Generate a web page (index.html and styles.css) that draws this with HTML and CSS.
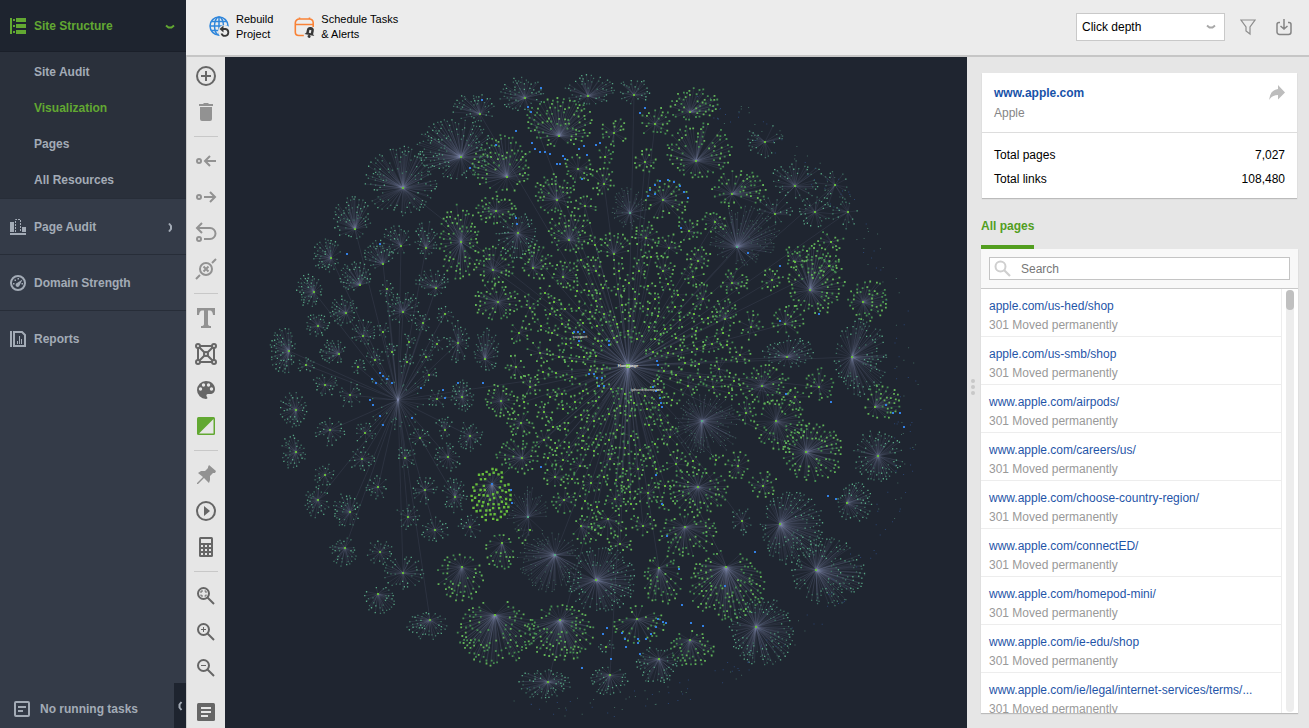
FILE: index.html
```html
<!DOCTYPE html>
<html lang="en">
<head>
<meta charset="utf-8">
<title>Site Structure – Visualization</title>
<link rel="stylesheet" href="styles.css">
</head>
<body>
<div class="app">
  <nav class="sidebar" aria-label="Main">
    <button class="nav-head" type="button">
      <svg class="nav-icon" viewBox="0 0 16 16"><path fill="currentColor" d="M0 0h2v16H0zM3 1h2v2H3zM3 7h2v2H3zM3 13h2v2H3zM6 0h10v4H6zM6 6h10v4H6zM6 12h10v4H6z"/></svg>
      <span>Site Structure</span>
      <svg class="nav-chev" viewBox="0 0 10 10"><path d="M1 4.500 3.500 6.500h3L9 4.500" fill="none" stroke="currentColor" stroke-width="2"/></svg>
    </button>
    <ul class="subnav">
      <li><a href="#audit">Site Audit</a></li>
      <li><a href="#visualization" class="active">Visualization</a></li>
      <li><a href="#pages">Pages</a></li>
      <li><a href="#resources">All Resources</a></li>
    </ul>
    <button class="nav-item" type="button">
      <svg class="nav-icon" viewBox="0 0 16 16"><path fill="currentColor" d="M0 3h4v10H0zM12 8h4v5h-4zM0 14h16v2H0z"/><path d="M5.500 13V.5h5V13" fill="none" stroke="currentColor" stroke-dasharray="2 1"/></svg>
      <span>Page Audit</span>
      <svg class="nav-chev" viewBox="0 0 10 10"><path d="M4 1.500 6 4v3L4 9.500" fill="none" stroke="currentColor" stroke-width="2"/></svg>
    </button>
    <button class="nav-item" type="button">
      <svg class="nav-icon" viewBox="0 0 16 16"><circle cx="8" cy="8" r="7" fill="none" stroke="currentColor" stroke-width="2"/><path fill="currentColor" d="M12.500 4.500 9.500 10.500a2 2 0 1 1-2.500-2.500zM7.500 3h1.500v1.500H7.500zM4.500 4.500H6V6H4.500zM3 8h1.500v1.500H3zM11.500 8H13v1.500h-1.500z"/></svg>
      <span>Domain Strength</span>
    </button>
    <button class="nav-item last" type="button">
      <svg class="nav-icon" viewBox="0 0 16 16"><path d="M1 0v16M4 1h8l3 3v11H4z" fill="none" stroke="currentColor" stroke-width="2"/><path d="M7.500 13v-3M9.500 13V5M11.500 13V8" stroke="currentColor"/></svg>
      <span>Reports</span>
    </button>
    <div class="side-foot">
      <button class="tasks" type="button">
        <svg class="nav-icon" viewBox="0 0 16 16"><rect x="1" y="1" width="14" height="14" rx="1" fill="none" stroke="currentColor" stroke-width="2"/><path d="M4 6h8M4 10h5" stroke="currentColor" stroke-width="2"/></svg>
        <span>No running tasks</span>
      </button>
      <button class="collapse" type="button" aria-label="Collapse sidebar"><svg viewBox="0 0 10 10"><path d="M6.500 1 4.500 3.500v3l2 2.500" fill="none" stroke="currentColor" stroke-width="2"/></svg></button>
    </div>
  </nav>

  <div class="main">
    <header class="topbar">
      <button class="action" type="button">
        <svg viewBox="0 0 22 22"><g fill="none" stroke="#2f86db" stroke-width="1.500"><circle cx="10" cy="10" r="9"/><ellipse cx="10" cy="10" rx="4.500" ry="9"/><path d="M10 1v18M1 10h18M2.500 5.500h15M2.500 14.500h15"/></g><circle cx="15.500" cy="15.500" r="6.500" fill="#ececec"/><path d="M12 13h4.500a3.500 3.500 0 1 1-4 4.500" fill="none" stroke="#383838" stroke-width="1.800"/><path d="m14.500 9.500-4 3.500 4 3.500z" fill="#383838"/></svg>
        <span>Rebuild<br>Project</span>
      </button>
      <button class="action" type="button">
        <svg viewBox="0 0 22 22"><g fill="none" stroke="#f98236" stroke-width="1.600"><path d="M19.200 11V6.500a4 4 0 0 0-4-3.500H5.500A4 4 0 0 0 1.300 7v9q0 3.500 3.500 3.500h5M1.500 8.500h17.500M5.500 3V1.500M15.500 3V1.500"/></g><g transform="rotate(12 16 16)"><path d="M16 11a3.500 3.500 0 0 1 3.500 3.500v3l1.500 1.500H11l1.500-1.500v-3A3.500 3.500 0 0 1 16 11z" fill="#383838"/><path d="M15 14h2v3h-2z" fill="#ececec"/><circle cx="16" cy="20.500" r="1.500" fill="#383838"/></g></svg>
        <span>Schedule Tasks<br>&amp; Alerts</span>
      </button>
      <div class="top-right">
        <div class="select-wrap">
          <select aria-label="Node sizing"><option>Click depth</option><option>Page rank</option></select>
          <svg viewBox="0 0 10 10"><path d="M1 3.500 3.500 5.500h3L9 3.500" fill="none" stroke="#a8a8a8" stroke-width="2"/></svg>
        </div>
        <button class="icon-btn" type="button" aria-label="Filter"><svg viewBox="0 0 16 18"><path d="M1 2h14L10 9v7l-4-3V9z" fill="none" stroke="#8d8d8d" stroke-width="1.200"/></svg></button>
        <button class="icon-btn" type="button" aria-label="Export"><svg viewBox="0 0 16 18"><path d="M4 4.500H3a2 2 0 0 0-2 2V14a2.500 2.500 0 0 0 2.500 2.500h9A2.500 2.500 0 0 0 15 14V6.500a2 2 0 0 0-2-2h-1M8 1v9M4.500 8 8 11l3.500-3" fill="none" stroke="#858585" stroke-width="1.500"/></svg></button>
      </div>
    </header>

    <div class="work">
      <div class="tools" role="toolbar" aria-label="Graph tools">
        <button type="button" class="dark" aria-label="Add page"><svg viewBox="0 0 24 24"><circle cx="12" cy="12" r="9" class="ln"/><path class="ln" d="M12 7v10M7 12h10"/></svg></button>
        <button type="button" aria-label="Delete"><svg viewBox="0 0 24 24"><path class="fl" d="M5 4h4l1-1h4l1 1h4v2H5zM6 7h12v12a2 2 0 0 1-2 2H8a2 2 0 0 1-2-2z"/></svg></button>
        <hr>
        <button type="button" aria-label="Link from"><svg viewBox="0 0 24 24"><circle class="ln" cx="5" cy="12" r="2"/><path class="ln" d="M22 12H11M16 7l-5 5 5 5"/></svg></button>
        <button type="button" aria-label="Link to"><svg viewBox="0 0 24 24"><circle class="ln" cx="5" cy="12" r="2"/><path class="ln" d="M10 12h11M16 7l5 5-5 5"/></svg></button>
        <button type="button" aria-label="Redirect"><svg viewBox="0 0 24 24"><circle class="ln" cx="5" cy="18" r="2"/><path class="ln" d="M8 2 3 7l5 5M4 7h12a5.500 5.500 0 0 1 0 11h-6"/></svg></button>
        <button type="button" aria-label="Remove link"><svg viewBox="0 0 24 24"><circle class="ln" cx="12" cy="12" r="6"/><path class="ln" d="m9.500 9.500 5 5M14.500 9.500l-5 5M18 6l4-4M2 22l4-4"/></svg></button>
        <hr>
        <button type="button" aria-label="Text labels"><svg viewBox="0 0 24 24"><path class="fl" d="M3 2h18v7h-2q-.5-4.500-3-4.500h-2V18q0 2 3 2v2H7v-2q3 0 3-2V4.500H8Q5.500 4.500 5 9H3z"/></svg></button>
        <button type="button" class="dark" aria-label="Graph layout"><svg viewBox="0 0 24 24"><path class="ln" d="M4 4h16v16H4zM4 4l16 16M20 4 4 20"/><g class="nodes"><circle cx="4" cy="4" r="2"/><circle cx="20" cy="4" r="2"/><circle cx="4" cy="20" r="2"/><circle cx="20" cy="20" r="2"/><circle cx="12" cy="12" r="2"/></g></svg></button>
        <button type="button" class="dark" aria-label="Colors"><svg viewBox="0 0 24 24"><path class="fl" d="M12 3c5 0 9 3.500 9 8 0 3-2 5-5 5h-2c-2 0-2 2-1 3s0 2-1 2a9 9 0 0 1 0-18z"/><g fill="#e6e6e6"><circle cx="6.500" cy="11" r="1.700"/><circle cx="9.500" cy="7" r="1.700"/><circle cx="14.500" cy="7" r="1.700"/><circle cx="17.500" cy="11" r="1.700"/></g></svg></button>
        <button type="button" class="on" aria-label="Invert background"><svg viewBox="0 0 24 24"><rect x="3" y="3" width="18" height="18" rx="1.500" class="fl"/><path d="M19.500 5v14.500H5z" fill="#e6e6e6"/></svg></button>
        <hr>
        <button type="button" aria-label="Pin"><svg viewBox="0 0 24 24"><path class="fl" d="m15 2 7 6-1 2-2 0-3 3v4l-1 3-5-5-6 6H3v-1l6-6-5-4 3-2h4l3-3V4z"/></svg></button>
        <button type="button" class="dark" aria-label="Play"><svg viewBox="0 0 24 24"><circle class="ln" cx="12" cy="12" r="9"/><path class="fl" d="m10 7 6 5-6 5z"/></svg></button>
        <button type="button" class="dark" aria-label="Recalculate"><svg viewBox="0 0 24 24"><rect class="fl" x="5" y="2" width="14" height="20" rx="1.500"/><path fill="#e6e6e6" d="M7 4h10v4H7zM7 10h2v2H7zM11 10h2v2h-2zM15 10h2v2h-2zM7 14h2v2H7zM11 14h2v2h-2zM15 14h2v2h-2zM7 18h2v2H7zM11 18h2v2h-2zM15 18h2v2h-2z"/></svg></button>
        <hr>
        <button type="button" class="dark" aria-label="Fit to screen"><svg viewBox="0 0 24 24"><circle class="ln" cx="9.500" cy="9.500" r="5.500"/><path class="ln" d="m13.500 13.500 6.500 6.500"/><path class="thin" d="M7 9V7h2M10.500 7H12v2M7 10.500V12h2M12 10.500V12h-1.500"/></svg></button>
        <button type="button" class="dark" aria-label="Zoom in"><svg viewBox="0 0 24 24"><circle class="ln" cx="9.500" cy="9.500" r="5.500"/><path class="ln" d="m13.500 13.500 6.500 6.500"/><path class="thin" d="M9.500 7v5M7 9.500h5"/></svg></button>
        <button type="button" class="dark" aria-label="Zoom out"><svg viewBox="0 0 24 24"><circle class="ln" cx="9.500" cy="9.500" r="5.500"/><path class="ln" d="m13.500 13.500 6.500 6.500"/><path class="thin" d="M7 9.500h5"/></svg></button>
        <button type="button" class="dark note" aria-label="Legend"><svg viewBox="0 0 24 24"><rect class="fl" x="3" y="3" width="18" height="18" rx="1.500"/><path d="M7 8h10M7 12h10M7 16h7" stroke="#e6e6e6" stroke-width="2"/></svg></button>
      </div>

      <main class="graph"><svg id="graph" viewBox="225 57 742 671" role="img" aria-label="Site link graph"></svg></main>

      <div class="grip"><i></i><i></i><i></i></div>
      <aside class="panel">
        <section class="card">
          <div class="card-head">
            <div><a href="#apple">www.apple.com</a><p>Apple</p></div>
            <svg viewBox="0 0 16 16"><path d="M9 0v4Q1 5 0 15q3-5 9-5v4.500l7-7z" fill="#bdbdbd"/></svg>
          </div>
          <dl>
            <div><dt>Total pages</dt><dd>7,027</dd></div>
            <div><dt>Total links</dt><dd>108,480</dd></div>
          </dl>
        </section>
        <div class="tabs"><button type="button">All pages</button></div>
        <div class="pages">
          <label class="search">
            <svg viewBox="0 0 18 18"><circle cx="6.500" cy="6.500" r="5" fill="none" stroke="#cfcfcf" stroke-width="2"/><path d="m10 10 6 6" stroke="#cfcfcf" stroke-width="2.200"/></svg>
            <input type="text" placeholder="Search" aria-label="Search">
          </label>
          <div class="scroll">
            <ul>
              <li><a href="#p1">apple.com/us-hed/shop</a><span>301 Moved permanently</span></li>
              <li><a href="#p2">apple.com/us-smb/shop</a><span>301 Moved permanently</span></li>
              <li><a href="#p3">www.apple.com/airpods/</a><span>301 Moved permanently</span></li>
              <li><a href="#p4">www.apple.com/careers/us/</a><span>301 Moved permanently</span></li>
              <li><a href="#p5">www.apple.com/choose-country-region/</a><span>301 Moved permanently</span></li>
              <li><a href="#p6">www.apple.com/connectED/</a><span>301 Moved permanently</span></li>
              <li><a href="#p7">www.apple.com/homepod-mini/</a><span>301 Moved permanently</span></li>
              <li><a href="#p8">www.apple.com/ie-edu/shop</a><span>301 Moved permanently</span></li>
              <li><a href="#p9">www.apple.com/ie/legal/internet-services/terms/...</a><span>301 Moved permanently</span></li>
            </ul>
            <div class="track"><div class="thumb"></div></div>
          </div>
        </div>
      </aside>
    </div>
  </div>
</div>
<script src="graph.js"></script>
</body>
</html>
```
FILE: styles.css
```css
* { box-sizing: border-box; }
body { margin: 0; font-family: "Liberation Sans", Arial, sans-serif; font-size: 12px; color: #000; }
button { font: inherit; color: inherit; background: none; border: 0; padding: 0; text-align: left; }
a { text-decoration: none; color: inherit; }
ul, dl, dd, p { margin: 0; padding: 0; list-style: none; }
svg { display: block; flex: none; }

.app { display: flex; height: 100vh; overflow: hidden; }

.sidebar { width: 186px; flex: none; display: flex; flex-direction: column; background: #343b48; color: #a3abb6; font-weight: bold; }
.nav-head, .nav-item { display: flex; align-items: center; gap: 8px; padding: 0 11px 0 10px; flex: none; }
.nav-head { height: 52px; background: #1e242f; color: #62a832; border-bottom: 1px solid #1a1f29; }
.nav-item { height: 56px; border-bottom: 1px solid #272d38; }
.nav-item.last { border-bottom: 0; }
.nav-icon { width: 16px; height: 16px; }
.nav-chev { width: 10px; height: 10px; margin-left: auto; }
.subnav { background: #2a303b; padding-top: 2px; border-bottom: 1px solid #272d38; }
.subnav a { display: block; height: 36px; line-height: 36px; padding-left: 34px; }
.subnav .active { color: #62a832; }
.side-foot { margin-top: auto; display: flex; align-items: flex-end; justify-content: space-between; }
.tasks { display: flex; align-items: center; gap: 10px; height: 38px; padding-left: 14px; }
.collapse { width: 12px; height: 45px; background: #1e242f; display: flex; align-items: center; justify-content: center; }
.collapse svg { width: 10px; height: 10px; }

.main { flex: 1; min-width: 0; display: flex; flex-direction: column; }
.topbar { height: 57px; flex: none; display: flex; align-items: center; gap: 21px; padding: 0 12px 2px 23px; background: #ececec; border-bottom: 2px solid #c6c6c6; }
.action { display: flex; align-items: center; gap: 5px; font-size: 11px; line-height: 15px; }
.action svg { width: 22px; height: 22px; }
.top-right { margin-left: auto; display: flex; align-items: center; gap: 10px; }
.select-wrap { width: 149px; display: grid; align-items: center; }
.select-wrap select { grid-area: 1 / 1; height: 28px; appearance: none; background: #fff; border: 1px solid #c9c9c9; border-radius: 0; padding: 0 5px; font: inherit; color: #000; }
.select-wrap svg { grid-area: 1 / 1; justify-self: end; width: 10px; height: 10px; margin-right: 9px; pointer-events: none; }
.icon-btn { width: 26px; height: 26px; display: flex; align-items: center; justify-content: center; }
.icon-btn svg { width: 16px; height: 18px; }

.work { flex: 1; min-height: 0; display: flex; background: #e6e6e6; }
.tools { width: 39px; flex: none; display: flex; flex-direction: column; align-items: center; padding-top: 1px; border-left: 1px solid #c9c9c9; color: #929292; }
.tools button { height: 36px; flex: none; display: flex; align-items: center; }
.tools svg { width: 24px; height: 24px; }
.tools hr { width: 24px; height: 13px; flex: none; margin: 0; border: 0; background: linear-gradient(#c8c8c8, #c8c8c8) center / 24px 1px no-repeat; }
.tools .dark { color: #666; }
.tools .on { color: #62a832; }
.tools .note { height: 32px; margin-top: auto; }
.ln { fill: none; stroke: currentColor; stroke-width: 2; }
.fl { fill: currentColor; }
.thin { fill: none; stroke: currentColor; stroke-width: 1; }
.nodes { fill: #e6e6e6; stroke: currentColor; stroke-width: 2; }

.graph { flex: 1; min-width: 0; background: #1f2530; overflow: hidden; }
.graph svg { width: 100%; height: 100%; }
.edge { stroke: #8994b4; stroke-width: 1; stroke-opacity: .11; }
.trunk { stroke: #8994b4; stroke-width: 1; stroke-opacity: .12; }
.label { font-size: 4px; font-weight: bold; fill: #e4e6df; text-anchor: middle; }

.grip { width: 14px; flex: none; display: flex; flex-direction: column; align-items: center; justify-content: center; gap: 2px; padding: 0 2px 12px 0; }
.grip i { width: 4px; height: 4px; border-radius: 2px; background: #c8c8c8; }
.panel { width: 317px; flex: none; margin-right: 11px; padding: 16px 0 15px; display: flex; flex-direction: column; }
.card { margin: 0 1px; background: #fff; box-shadow: 0 1px 1px #bbb; }
.card-head { display: flex; justify-content: space-between; padding: 10px 12px 9px; line-height: 20px; border-bottom: 1px solid #ddd; color: #858585; }
.card-head a { color: #1852a8; font-weight: bold; }
.card-head svg { width: 16px; height: 16px; margin-top: 2px; }
.card dl { padding: 10px 12px 7px; line-height: 24px; }
.card dl div { display: flex; justify-content: space-between; }
.tabs { margin-top: 14px; display: flex; flex: none; }
.tabs button { height: 37px; padding-bottom: 5px; border-bottom: 4px solid #529e1f; color: #529e1f; font-weight: bold; line-height: 28px; }
.pages { flex: 1; min-height: 0; display: flex; flex-direction: column; background: #fff; box-shadow: 0 1px 1px #bbb; }
.search { flex: none; display: grid; align-items: center; padding: 8px; background: #f8f8f8; border-bottom: 1px solid #c9c9c9; }
.search input { grid-area: 1 / 1; width: 100%; height: 23px; border: 1px solid #c4c4c4; border-radius: 0; background: #fff; padding: 1px 8px 0 31px; font: inherit; }
.search input::placeholder { color: #777; opacity: 1; }
.search svg { grid-area: 1 / 1; z-index: 1; width: 18px; height: 18px; margin-left: 5px; }
.scroll { flex: 1; min-height: 0; display: flex; overflow: hidden; }
.scroll ul { flex: 1; min-width: 0; border-right: 1px solid #ededed; }
.scroll li { height: 48px; padding: 8px 8px 1px; border-bottom: 1px solid #ededed; line-height: 19px; white-space: nowrap; }
.scroll a, .scroll li span { display: block; }
.scroll a { color: #1f55a8; }
.scroll li span { color: #999; }
.track { width: 8px; flex: none; margin: 1px 4px 1px; border-radius: 4px; background: #ededed; }
.thumb { height: 20px; border-radius: 4px; background: #c0c0c0; }
```
FILE: graph.js
```js
// Deterministic radial graph: each cluster is a hub with a fan of leaf pages.
const svg = document.getElementById('graph');
let seed = 77;
const rnd = () => (seed = (seed * 1664525 + 1013904223) % 4294967296) / 4294967296;
const HOME = [628, 366], SUB = [398, 400];

// kind, hub x, hub y, fan centre x, fan centre y, radius x, radius y, leaves
// kinds: g green, t teal, d faint, l lime
const clusters = `
t 480 114 474 108 22 15 42;t 525 98 522 94 23 17 55;t 588 96 590 90 25 16 50;g 559 136 560 122 34 25 105
t 461 157 454 149 38 31 130;t 403 188 401 181 36 35 120;g 507 177 502 164 31 29 95;t 355 229 352 218 20 22 60
t 331 258 327 255 14 18 45;t 401 246 396 240 16 16 30;t 426 248 426 240 12 19 35;t 383 264 379 255 15 15 35
g 461 242 459 242 21 38 90;g 496 211 496 210 21 14 45;t 518 233 517 236 21 24 60;g 557 200 555 194 21 20 55
g 578 169 580 168 15 15 25;g 569 240 570 232 23 21 62;g 493 270 494 265 21 19 50;g 533 268 537 262 16 18 40
g 563 277 565 275 15 14 28;g 498 302 496 301 24 19 55;t 314 292 309 291 13 17 45;t 360 285 355 276 16 15 48
t 346 313 343 311 14 15 40;t 403 312 403 307 18 16 40;t 436 288 432 283 17 13 35;t 387 289 387 289 9 9 12
t 318 326 317 325 13 13 28;t 289 351 283 350 13 25 60;t 363 336 363 332 13 13 25;t 339 354 333 352 13 13 35
t 423 323 423 323 9 10 14;t 445 314 445 314 9 9 12;t 458 343 458 342 12 22 35;t 485 359 487 350 13 22 42
t 383 332 383 330 7 8 9;t 437 344 437 342 8 10 11;t 409 342 409 340 7 8 9;t 375 360 375 357 9 9 14
t 358 367 358 366 8 8 11;t 306 365 306 364 9 9 14;t 392 352 392 351 7 8 10;t 407 362 407 361 7 7 10
t 426 357 426 355 7 8 10;t 429 375 429 374 8 8 10;g 519 333 519 332 13 13 15;g 530 308 530 307 10 13 15
g 540 353 540 352 13 12 15;g 516 367 516 367 11 13 15;g 614 254 615 246 15 14 28;g 646 238 646 236 14 15 26
g 669 248 669 246 13 13 20;g 689 231 689 229 13 12 20;g 698 261 698 258 13 12 22;g 596 271 596 269 12 13 15
g 639 271 639 269 10 13 13;g 663 271 664 268 11 12 18;g 693 277 693 276 12 11 14;d 737 247 744 235 36 30 110
g 810 290 816 280 29 36 115;g 732 283 734 282 15 14 26;g 772 280 771 280 13 12 18;g 703 299 703 297 12 13 18
g 725 319 725 313 13 15 30;g 751 327 751 325 12 15 18;g 785 324 788 320 16 16 30;t 787 357 788 352 26 16 55
g 762 386 765 384 27 20 60;g 740 355 740 355 11 12 14;g 719 369 719 369 12 12 16;g 713 387 713 386 12 11 14
g 688 386 688 386 11 11 14;g 712 344 712 344 10 10 12;d 702 421 707 425 34 31 110;g 746 413 746 411 11 14 18
g 776 421 780 424 26 27 65;g 806 452 813 452 30 30 110;g 738 466 738 466 13 15 22;g 763 486 763 484 14 15 25
g 698 487 699 490 30 24 85;g 676 464 676 462 12 12 14;g 670 437 670 436 11 11 12;g 648 493 648 492 13 15 22
g 638 469 638 468 11 11 14;g 610 459 610 458 12 12 16;g 580 466 580 465 11 12 14;g 555 477 555 476 13 12 20
g 564 500 564 500 14 13 22;g 591 483 591 483 10 12 14;g 615 499 615 498 12 12 18;g 530 387 530 386 12 12 18
g 501 401 501 401 17 18 40;g 521 423 521 423 14 15 26;g 544 440 544 440 11 11 13;g 544 412 544 412 11 11 13
g 522 458 517 457 21 18 48;l 492 484 491 495 20 27 68;d 528 517 528 512 22 25 45;t 455 497 455 495 13 18 36
t 462 397 462 395 12 17 38;t 470 436 470 436 13 16 30;t 448 457 448 457 14 15 26;g 819 387 820 384 15 16 26
g 875 407 882 402 18 18 42;t 878 456 878 456 25 27 80;t 847 503 855 503 18 21 55;t 780 524 792 528 33 37 140
t 742 521 742 521 12 14 17;g 685 527 688 534 30 23 70;g 581 526 587 530 15 15 28;g 608 519 609 524 18 15 26
g 643 526 643 524 13 13 17;t 596 580 602 580 35 34 125;g 659 568 662 580 20 25 55;g 726 567 726 585 39 35 145
t 816 570 828 572 37 35 130;t 756 627 763 632 34 34 130;g 637 619 639 625 26 19 42;g 690 640 692 649 22 19 55
t 659 659 657 665 21 19 55;t 610 675 609 681 19 15 40;g 560 620 561 633 35 28 120;t 606 647 606 647 8 8 9
g 495 615 496 633 39 33 130;d 555 555 550 562 33 30 105;g 502 543 501 552 16 18 32;g 462 567 459 578 25 24 60
t 403 573 404 573 20 17 38;t 378 594 379 600 17 14 32;t 430 620 428 626 22 14 45;t 548 682 543 684 28 15 62
t 345 548 343 552 14 15 34;t 380 552 380 552 13 13 24;t 350 512 347 510 14 18 38;t 408 517 408 517 13 13 20
t 435 530 435 530 14 13 24;t 318 500 317 502 13 17 34;t 296 452 293 452 13 17 38;t 296 410 293 410 14 18 42
t 325 475 325 475 11 12 20;t 330 430 330 432 15 14 26;t 362 459 362 459 13 13 22;t 378 487 378 487 12 12 20
t 425 490 425 490 13 14 24;t 405 458 405 458 12 12 18;t 420 438 420 438 11 10 15;t 445 430 445 428 10 12 16
t 365 433 365 433 11 11 16;t 350 395 350 395 13 13 18;t 325 385 325 385 13 12 22;t 437 399 437 399 9 11 13
g 732 194 739 189 27 20 62;g 696 161 699 150 33 28 90;g 690 112 693 104 26 17 58;g 655 124 655 122 17 15 28
t 634 95 634 91 16 13 28;g 614 133 614 132 13 15 22;g 645 162 645 160 11 13 18;d 630 213 629 208 18 22 48
g 663 200 667 200 22 22 44;g 604 184 604 182 13 14 22;g 585 206 585 206 12 11 14;g 605 157 605 156 9 9 10
t 765 142 765 140 18 18 24;t 795 186 797 180 26 22 44;t 835 185 832 188 18 18 20;t 815 212 815 212 20 16 28
t 848 212 845 214 13 15 16;t 775 214 775 210 18 14 20;g 863 302 868 300 20 21 55;t 852 357 861 357 27 40 105
g 831 242 831 240 13 11 15;g 829 266 829 264 12 11 14;g 715 222 714 222 13 12 17;g 795 262 797 256 16 12 22
t 470 527 470 527 12 13 18;g 795 397 797 400 14 12 16;g 620 544 620 544 14 10 14;g 530 530 520 538 8 8 4
`.trim().split(/[;\n]/).map(s => { const a = s.split(' '); return [a[0], ...a.slice(1).map(Number)]; });

const edges = [], dots = { g: '', h: '', t: '', u: '', d: '', l: '', b: '', c: '' };
const line = (x1, y1, x2, y2, cls) => edges.push(`<line class="${cls}" x1="${x1}" y1="${y1}" x2="${x2.toFixed(1)}" y2="${y2.toFixed(1)}"/>`);
const dot = (k, x, y, s) => { dots[k] += `M${(x - s / 2).toFixed(1)} ${(y - s / 2).toFixed(1)}h${s}v${s}h-${s}z`; };

// Leaves spread evenly over an ellipse, with a gap kept round the hub and between leaves.
function fan([k, hx, hy, cx, cy, rx, ry, n]) {
  const big = k === 'l' ? 3.6 : k === 'g' ? 3 : 2.4, placed = [];
  const hole = Math.min(rx, ry) * .42;
  const total = k === 'g' ? n * .85 : n;
  for (let tries = 0; tries < n * 12 && placed.length < total; tries++) {
    const t = Math.pow(rnd(), .42), a = rnd() * 6.2832;
    const x = cx + rx * t * Math.cos(a), y = cy + ry * t * Math.sin(a);
    if (Math.hypot(x - hx, y - hy) < hole) continue;
    if (placed.some(p => Math.hypot(x - p[0], y - p[1]) < big)) continue;
    placed.push([x, y]);
    line(hx, hy, x, y, 'edge');
    if (k === 'g') dot(rnd() < .45 ? 'g' : 'h', x, y, 1.8);
    else if (k === 't') dot(rnd() < .4 ? 't' : 'u', x, y, 1.3);
    else if (k === 'l') dot('l', x, y, 2.4);
    else dot('d', x, y, 1);
  }
  dot(k === 'd' ? 't' : k === 'l' ? 'b' : 'l', hx, hy, 2);
}

// Links from the two main hubs to their sections.
clusters.forEach(c => {
  const hub = c[1] < 480 && c[0] === 't' && c[2] > 220 ? SUB : HOME;
  if (hub === HOME ? rnd() < .5 : rnd() < .75) line(hub[0], hub[1], c[1], c[2], 'trunk');
});
clusters.forEach(fan);

// Small sections around the home page.
const minis = [];
for (let i = 0; i < 6000 && minis.length < 125; i++) {
  const a = rnd() * 6.283, r = Math.sqrt(rnd());
  const x = HOME[0] + 108 * r * Math.cos(a), y = 378 + 142 * r * Math.sin(a);
  if (Math.hypot(x - HOME[0], y - HOME[1]) < 26) continue;
  if (clusters.some(c => Math.hypot((x - c[3]) / (c[5] + 4), (y - c[4]) / (c[6] + 4)) < 1)) continue;
  if (minis.some(m => Math.hypot(x - m[0], y - m[1]) < 12)) continue;
  minis.push([x, y]);
  line(HOME[0], HOME[1], x, y, 'edge');
  fan(['g', Math.round(x), Math.round(y), x, y, 8, 8, 7]);
}
for (let i = 0; i < 30; i++) {
  const a = rnd() * 6.283, r = 26 + rnd() * 20;
  line(HOME[0], HOME[1], HOME[0] + r * Math.cos(a), HOME[1] + r * Math.sin(a), 'edge');
}
for (let i = 0; i < 40; i++) {
  const a = rnd() * 6.283, r = 12 + rnd() * 20, x = SUB[0] + r * Math.cos(a), y = SUB[1] + r * Math.sin(a) * 1.1;
  line(SUB[0], SUB[1], x, y, 'edge'); dot('u', x, y, 1.3);
}
line(SUB[0], SUB[1], HOME[0], HOME[1], 'trunk');

// Faint outlying pages along the rim.
for (let i = 0; i < 230; i++) {
  const a = -1.25 + rnd() * 3.1, r = 298 + rnd() * 26;
  dot(rnd() < .6 ? 'c' : 'd', 598 + r * Math.cos(a), 394 + r * Math.sin(a), 1);
}

// Blue pages.
`609 341;609 345;657 361;658 365;589 374;594 374;597 378;602 378;604 386;599 386;653 387;656 391;660 398;661 403;662 407;574 332;578 332;584 332;579 341
483 383;443 390;511 490;541 467;512 503;656 475;662 504;667 536;679 569;682 605;725 586;755 552;828 496;836 499;831 402;786 394;780 321;819 314;748 253;681 228;780 266
528 107;531 112;532 143;535 149;540 152;563 156;565 159;557 164;560 164;579 149;584 146;587 155;582 179;516 218;517 224;516 131;482 100;541 88;347 254;380 244
650 190;655 185;660 181;668 180;674 182;680 186;684 192;688 198;655 194;648 196;640 113;645 108;603 634;607 628;622 633;625 639;626 647;638 639;638 643;646 639;651 634;656 627;658 619;663 622;666 623;691 623;703 626;611 659;640 654;582 668
376 383;380 373;383 376;387 379;392 383;370 400;373 405;380 416;372 379;412 418;383 425;421 388;900 413;904 427;893 413;886 405;596 145;600 143;496 145;470 168;445 398;458 383;545 152;550 154`
  .split(/[;\n]/).forEach(p => { const [x, y] = p.trim().split(' ').map(Number); dot('b', x, y, 2); });

const colors = { d: '#41695f', u: '#3f7263', t: '#57a884', h: '#458c50', g: '#62b457', c: '#2b4674', l: '#67bd3c', b: '#3280e4' };
svg.innerHTML = edges.join('') +
  Object.entries(colors).map(([k, c]) => `<path d="${dots[k]}" fill="${c}"/>`).join('') +
  `<rect x="626" y="364" width="4" height="4" fill="#67bd3c"/>
   <text class="label" x="628" y="367">Homepage</text>
   <text class="label" x="646" y="391" opacity=".75">iphone/compare</text>
   <text class="label" x="580" y="338" opacity=".75">support</text>`;
```
